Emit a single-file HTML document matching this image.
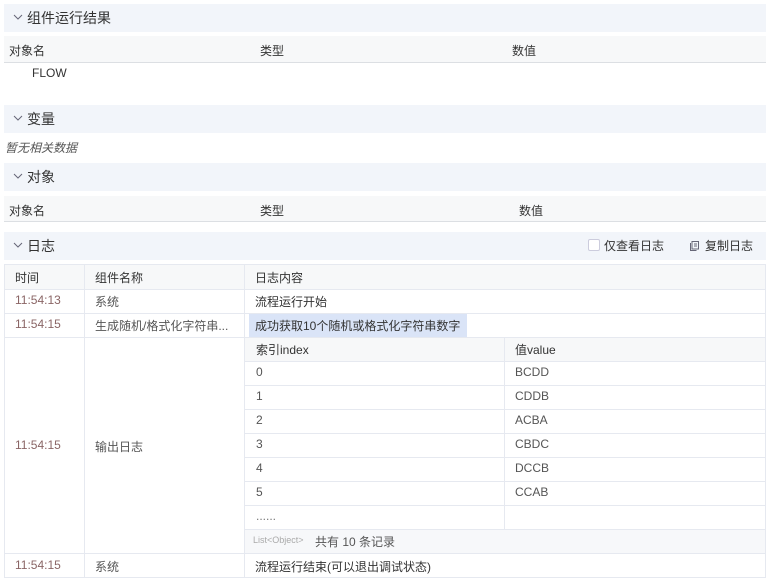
<!DOCTYPE html><html><head><meta charset="utf-8"><style>
*{margin:0;padding:0;box-sizing:border-box}
body{width:770px;height:582px;background:#fff;font-family:"Liberation Sans","Noto Sans CJK SC",sans-serif;font-size:12px;color:#333;position:relative;overflow:hidden}
.a{position:absolute;white-space:nowrap}
.hd{position:absolute;left:4px;width:762px;height:28px;background:#f2f5fa;font-size:14px;color:#333;line-height:28px;padding-left:23px}
.hd svg{position:absolute;left:9px;top:10px}
.th{position:absolute;left:4px;width:762px;background:#f7f8f9;border-bottom:1px solid #dcdfe3}
.ln{position:absolute;background:#e6e9f0}
.t{color:#8a6565}
</style></head><body>
<div class="hd" style="top:4px"><svg width="10" height="7" viewBox="0 0 10 7"><path d="M1 1L5 5L9 1" fill="none" stroke="#667" stroke-width="1"/></svg>组件运行结果</div>
<div class="th" style="top:36px;height:27px"></div>
<div class="a" style="left:9px;top:42px">对象名</div>
<div class="a" style="left:260px;top:42px">类型</div>
<div class="a" style="left:512px;top:42px">数值</div>
<div class="a" style="left:32px;top:66px">FLOW</div>
<div class="hd" style="top:105px"><svg width="10" height="7" viewBox="0 0 10 7"><path d="M1 1L5 5L9 1" fill="none" stroke="#667" stroke-width="1"/></svg>变量</div>
<div class="a" style="left:5px;top:139px;font-style:italic;color:#555">暂无相关数据</div>
<div class="hd" style="top:163px"><svg width="10" height="7" viewBox="0 0 10 7"><path d="M1 1L5 5L9 1" fill="none" stroke="#667" stroke-width="1"/></svg>对象</div>
<div class="th" style="top:196px;height:26px"></div>
<div class="a" style="left:9px;top:202px">对象名</div>
<div class="a" style="left:260px;top:202px">类型</div>
<div class="a" style="left:519px;top:202px">数值</div>
<div class="hd" style="top:232px"><svg width="10" height="7" viewBox="0 0 10 7"><path d="M1 1L5 5L9 1" fill="none" stroke="#667" stroke-width="1"/></svg>日志
<span class="a" style="left:584px;top:7px;width:12px;height:12px;border:1px solid #ccd;background:#fff;border-radius:2px"></span>
<span class="a" style="left:600px;top:0;font-size:12px">仅查看日志</span>
<svg style="left:685px;top:8px" width="11" height="12" viewBox="0 0 11 12"><path d="M3 1.5H9.5V9H3Z M1.5 3V10.5H7.5" fill="none" stroke="#667" stroke-width="1"/><path d="M5 4H8M5 6H8" stroke="#667"/></svg>
<span class="a" style="left:701px;top:0;font-size:12px">复制日志</span></div>
<!-- log table -->
<div class="a" style="left:4px;top:264px;width:762px;height:25px;background:#f7f8f9"></div>
<div class="a" style="left:244px;top:337px;width:521px;height:24px;background:#f7f8f9"></div>
<div class="a" style="left:244px;top:529px;width:521px;height:24px;background:#f7f8fa"></div>
<div class="a" style="left:249px;top:314px;width:218px;height:23px;background:#dae4f7"></div>
<div class="ln" style="left:4px;top:264px;width:762px;height:1px"></div>
<div class="ln" style="left:4px;top:289px;width:762px;height:1px"></div>
<div class="ln" style="left:4px;top:313px;width:762px;height:1px"></div>
<div class="ln" style="left:4px;top:337px;width:762px;height:1px"></div>
<div class="ln" style="left:4px;top:553px;width:762px;height:1px"></div>
<div class="ln" style="left:4px;top:577px;width:762px;height:1px"></div>
<div class="ln" style="left:4px;top:264px;width:1px;height:314px"></div>
<div class="ln" style="left:84px;top:264px;width:1px;height:314px"></div>
<div class="ln" style="left:244px;top:264px;width:1px;height:314px"></div>
<div class="ln" style="left:765px;top:264px;width:1px;height:314px"></div>
<div class="ln" style="left:504px;top:337px;width:1px;height:192px"></div>
<div class="ln" style="left:244px;top:361px;width:521px;height:1px"></div>
<div class="ln" style="left:244px;top:385px;width:521px;height:1px"></div>
<div class="ln" style="left:244px;top:409px;width:521px;height:1px"></div>
<div class="ln" style="left:244px;top:433px;width:521px;height:1px"></div>
<div class="ln" style="left:244px;top:457px;width:521px;height:1px"></div>
<div class="ln" style="left:244px;top:481px;width:521px;height:1px"></div>
<div class="ln" style="left:244px;top:505px;width:521px;height:1px"></div>
<div class="ln" style="left:244px;top:529px;width:521px;height:1px"></div>
<div class="a" style="left:15px;top:269px">时间</div>
<div class="a" style="left:95px;top:269px">组件名称</div>
<div class="a" style="left:255px;top:269px">日志内容</div>
<div class="a t" style="left:15px;top:293px">11:54:13</div>
<div class="a" style="left:95px;top:293px;color:#555">系统</div>
<div class="a" style="left:255px;top:293px">流程运行开始</div>
<div class="a t" style="left:15px;top:317px">11:54:15</div>
<div class="a" style="left:95px;top:317px;color:#555">生成随机/格式化字符串...</div>
<div class="a" style="left:255px;top:317px">成功获取10个随机或格式化字符串数字</div>
<div class="a t" style="left:15px;top:438px">11:54:15</div>
<div class="a" style="left:95px;top:438px;color:#555">输出日志</div>
<div class="a" style="left:256px;top:341px">索引index</div>
<div class="a" style="left:515px;top:341px">值value</div>
<div class="a" style="left:256px;top:365px;color:#555">0</div><div class="a" style="left:515px;top:365px;color:#555">BCDD</div>
<div class="a" style="left:256px;top:389px;color:#555">1</div><div class="a" style="left:515px;top:389px;color:#555">CDDB</div>
<div class="a" style="left:256px;top:413px;color:#555">2</div><div class="a" style="left:515px;top:413px;color:#555">ACBA</div>
<div class="a" style="left:256px;top:437px;color:#555">3</div><div class="a" style="left:515px;top:437px;color:#555">CBDC</div>
<div class="a" style="left:256px;top:461px;color:#555">4</div><div class="a" style="left:515px;top:461px;color:#555">DCCB</div>
<div class="a" style="left:256px;top:485px;color:#555">5</div><div class="a" style="left:515px;top:485px;color:#555">CCAB</div>
<div class="a" style="left:256px;top:509px;color:#777">......</div>
<div class="a" style="left:253px;top:535px;font-size:9px;color:#aaa">List&lt;Object&gt;</div>
<div class="a" style="left:315px;top:533px;color:#555">共有 10 条记录</div>
<div class="a t" style="left:15px;top:558px">11:54:15</div>
<div class="a" style="left:95px;top:558px;color:#555">系统</div>
<div class="a" style="left:255px;top:558px">流程运行结束(可以退出调试状态)</div>
</body></html>
